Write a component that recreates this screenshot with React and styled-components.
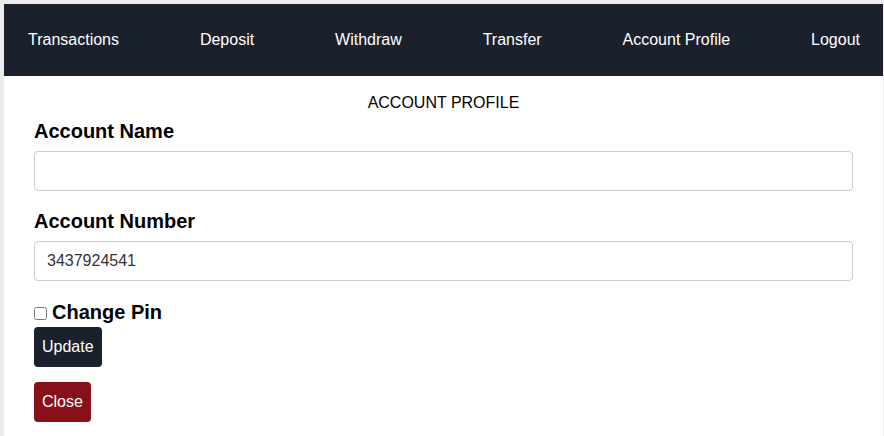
import React from "react";
import styled, { createGlobalStyle } from "styled-components";

const Global = createGlobalStyle`
  html, body { margin: 0; padding: 0; }
  body {
    background: #ececec;
    font-family: "Liberation Sans", Arial, Helvetica, sans-serif;
    color: #000;
  }
`;

const Frame = styled.div`
  padding: 4px 1px 0 4px;
  height: 436px;
  box-sizing: border-box;
`;

const Panel = styled.div`
  background: #fff;
  height: 100%;
`;

const Nav = styled.nav`
  height: 72px;
  background: #1a202c;
  display: flex;
  align-items: center;
  justify-content: space-between;
  padding: 0 23px 0 24px;
`;

const NavLink = styled.a`
  color: #fff;
  font-size: 16px;
  text-decoration: none;
  cursor: pointer;
`;

const Content = styled.div`
  padding: 18px 30px 0 30px;
`;

const Title = styled.div`
  text-align: center;
  font-size: 16px;
  line-height: 18px;
  margin-bottom: 8px;
`;

const Label = styled.label`
  display: block;
  font-size: 20px;
  font-weight: bold;
  line-height: 23px;
  margin-bottom: 8px;
`;

const Field = styled.div`
  margin-bottom: 19px;
`;

const Input = styled.input`
  display: block;
  width: 100%;
  box-sizing: border-box;
  height: 40px;
  border: 1px solid #c9ccd2;
  border-radius: 4px;
  padding: 0 12px;
  font-family: "Liberation Sans", Arial, sans-serif;
  font-size: 16px;
  color: #333;
  outline: none;
`;

const CheckRow = styled.label`
  display: flex;
  align-items: center;
  font-size: 20px;
  font-weight: bold;
  line-height: 23px;
  padding-top: 1px;
  margin-bottom: 3px;
  input {
    width: 13px;
    height: 13px;
    margin: 1px 5px 0 0;
  }
`;

const Button = styled.button`
  display: block;
  height: 40px;
  padding: 0 8px;
  border: none;
  border-radius: 4px;
  background: ${(p) => (p.$danger ? "#881119" : "#1a202c")};
  color: #fff;
  font-family: "Liberation Sans", Arial, sans-serif;
  font-size: 16px;
  margin-bottom: 15px;
  cursor: pointer;
`;

const links = ["Transactions", "Deposit", "Withdraw", "Transfer", "Account Profile", "Logout"];

export default function App() {
  return (
    <>
      <Global />
      <Frame>
        <Panel>
          <Nav>
            {links.map((l) => (
              <NavLink key={l}>{l}</NavLink>
            ))}
          </Nav>
          <Content>
            <Title>ACCOUNT PROFILE</Title>
            <Field>
              <Label>Account Name</Label>
              <Input type="text" defaultValue="" />
            </Field>
            <Field>
              <Label>Account Number</Label>
              <Input type="text" defaultValue="3437924541" />
            </Field>
            <CheckRow>
              <input type="checkbox" />
              Change Pin
            </CheckRow>
            <Button>Update</Button>
            <Button $danger>Close</Button>
          </Content>
        </Panel>
      </Frame>
    </>
  );
}
